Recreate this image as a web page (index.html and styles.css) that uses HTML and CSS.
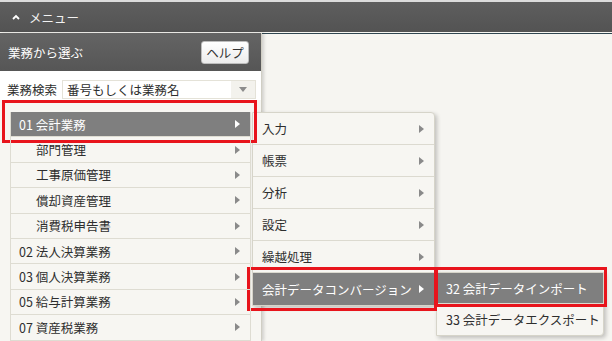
FILE: index.html
```html
<!DOCTYPE html>
<html lang="ja">
<head>
  <meta charset="UTF-8">
  <title>メニュー</title>
  <link rel="stylesheet" href="styles.css">
</head>
<body>
  <div class="topbar">
    <svg class="caret" width="8" height="6" viewBox="0 0 8 6"><polyline points="1,5 4,2 7,5" fill="none" stroke="#fff" stroke-width="1.8"/></svg>
    <span>メニュー</span>
  </div>
  <div class="main">
    <div class="panel">
      <div class="panel-head">
        <span>業務から選ぶ</span>
        <button class="help">ヘルプ</button>
      </div>
      <div class="search">
        <span class="search-label">業務検索</span>
        <div class="select">
          <span class="select-text">番号もしくは業務名</span>
          <span class="select-btn"><i class="down"></i></span>
        </div>
      </div>
      <ul class="list">
        <li class="item active marked mark-a">
          <span>01 会計業務</span><i class="arrow"></i>
          <ul class="submenu">
            <li class="sub-item"><span>入力</span><i class="arrow"></i></li>
            <li class="sub-item"><span>帳票</span><i class="arrow"></i></li>
            <li class="sub-item"><span>分析</span><i class="arrow"></i></li>
            <li class="sub-item"><span>設定</span><i class="arrow"></i></li>
            <li class="sub-item"><span>繰越処理</span><i class="arrow"></i></li>
            <li class="sub-item active marked mark-b">
              <span>会計データコンバージョン</span><i class="arrow"></i>
              <ul class="submenu submenu-2">
                <li class="leaf active marked mark-c">32 会計データインポート</li>
                <li class="leaf">33 会計データエクスポート</li>
              </ul>
            </li>
          </ul>
        </li>
        <li class="item child"><span>部門管理</span><i class="arrow"></i></li>
        <li class="item child"><span>工事原価管理</span><i class="arrow"></i></li>
        <li class="item child"><span>償却資産管理</span><i class="arrow"></i></li>
        <li class="item child"><span>消費税申告書</span><i class="arrow"></i></li>
        <li class="item"><span>02 法人決算業務</span><i class="arrow"></i></li>
        <li class="item"><span>03 個人決算業務</span><i class="arrow"></i></li>
        <li class="item"><span>05 給与計算業務</span><i class="arrow"></i></li>
        <li class="item"><span>07 資産税業務</span><i class="arrow"></i></li>
      </ul>
    </div>
    <div class="content"></div>
  </div>
</body>
</html>
```

FILE: styles.css
```css
* {
  box-sizing: border-box;
}
body {
  margin: 0;
  width: 612px;
  height: 341px;
  overflow: hidden;
  background: #f6f5f1;
  font-family: "Noto Sans CJK JP", "Noto Sans", sans-serif;
  font-size: 12.5px;
  color: #2e2e2e;
}
ul {
  list-style: none;
  margin: 0;
  padding: 0;
}
.topbar {
  height: 32px;
  border-top: 2px solid #dcdcdc;
  background: linear-gradient(#5e5e5e, #535353);
  color: #f2f2f2;
  display: flex;
  align-items: center;
  gap: 9px;
  padding-left: 12px;
}
.main {
  display: flex;
  height: 309px;
}
.panel {
  width: 262px;
  flex-shrink: 0;
  margin-top: 1px;
  background: #f7f6f2;
  border-right: 1px solid #d0cec4;
  box-shadow: 2px 0 3px rgba(0, 0, 0, 0.15);
  position: relative;
  z-index: 1;
}
.content {
  flex: 1;
  margin-top: 1px;
  border-top: 1px solid #2f4650;
}
.panel-head {
  height: 38px;
  background: linear-gradient(#646464, #565656);
  color: #fff;
  display: flex;
  align-items: center;
  justify-content: space-between;
  padding: 0 12px 0 8px;
}
.help {
  width: 48px;
  height: 23px;
  padding: 0;
  border: 1px solid #bdbdbd;
  border-radius: 3px;
  background: linear-gradient(#ffffff, #ececec);
  font-family: inherit;
  font-size: 12.5px;
  color: #333;
}
.search {
  height: 29px;
  background: #fff;
  display: flex;
  align-items: center;
  gap: 5px;
  padding: 8px 0 0 7px;
  white-space: nowrap;
}
.search-label {
  flex-shrink: 0;
}
.select {
  width: 194px;
  height: 19px;
  flex-shrink: 0;
  border: 1px solid #e4e2d8;
  display: flex;
  align-items: center;
  justify-content: space-between;
}
.select-text {
  padding-left: 4px;
}
.select-btn {
  width: 24px;
  height: 100%;
  background: #f3f2ed;
  display: flex;
  align-items: center;
  justify-content: center;
}
.down {
  border-top: 5px solid #8c8c8c;
  border-left: 4px solid transparent;
  border-right: 4px solid transparent;
}
.list {
  margin: 12px 10px 0 10px;
}
.item {
  height: 25.4px;
  border: 1px solid #dedcd2;
  border-top: none;
  display: flex;
  align-items: center;
  justify-content: space-between;
  padding: 0 10px 0 8px;
  position: relative;
}
.item.child {
  padding-left: 25px;
}
.arrow {
  border-left: 5px solid #8a8a8a;
  border-top: 4.5px solid transparent;
  border-bottom: 4.5px solid transparent;
}
.active {
  background: #7f7f7f;
  color: #fff;
}
.active > .arrow {
  border-left-color: #fff;
}
.submenu {
  position: absolute;
  left: calc(100% + 2px);
  top: 0;
  width: 183px;
  background: #f7f6f2;
  border: 1px solid #d6d4c9;
  border-radius: 0 4px 4px 0;
  box-shadow: 2px 2px 4px rgba(0, 0, 0, 0.22);
  color: #2e2e2e;
}
.sub-item {
  height: 32px;
  border-bottom: 1px solid #dcdad0;
  display: flex;
  align-items: center;
  justify-content: space-between;
  padding: 0 10px 0 9px;
  position: relative;
}
.sub-item:last-child {
  border-bottom: none;
}
.sub-item.active {
  color: #fff;
}
.submenu-2 {
  width: 168px;
  top: -1px;
  border-radius: 0 0 4px 0;
}
.leaf {
  height: 31px;
  border-bottom: 1px solid #dcdad0;
  display: flex;
  align-items: center;
  padding-left: 9px;
  position: relative;
}
.leaf:last-child {
  border-bottom: none;
}
.leaf.active {
  color: #fff;
}
.marked::after {
  content: "";
  position: absolute;
  border: 3px solid #e8141c;
  pointer-events: none;
}
.mark-a::after {
  left: -9px;
  right: -7px;
  top: -12px;
  bottom: -7px;
}
.mark-b::after {
  left: -6px;
  right: -3px;
  top: -6px;
  bottom: -6px;
}
.mark-c::after {
  left: -2px;
  right: -4px;
  top: -6px;
  bottom: -4px;
}
```
